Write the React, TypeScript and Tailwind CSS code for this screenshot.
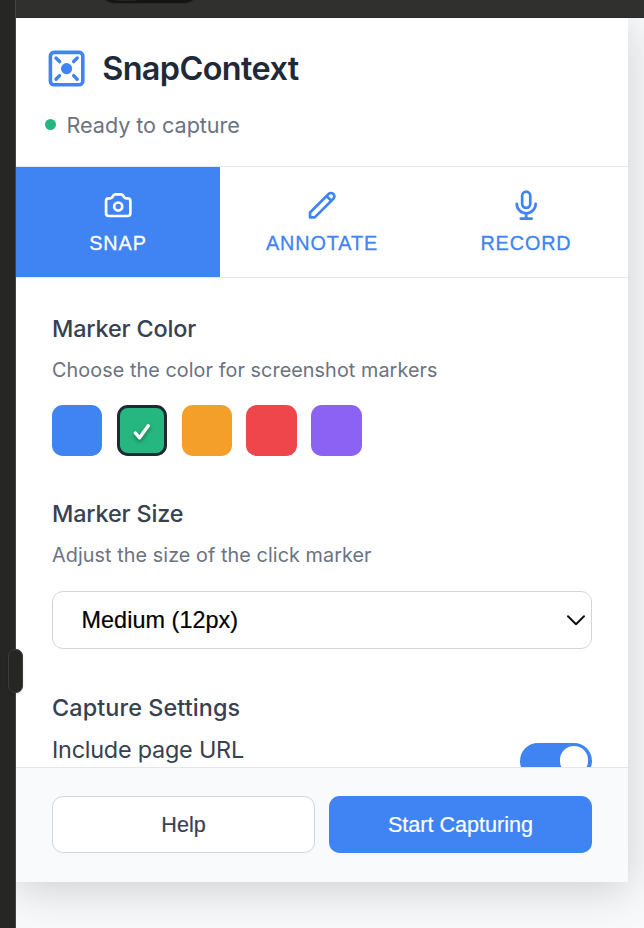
import type { ReactNode } from "react";

const sans = "font-['Inter','Liberation_Sans',sans-serif]";
const arial = "font-['Liberation_Sans',Arial,sans-serif]";

function Logo() {
  return (
    <svg className="size-[43.2px] shrink-0 text-[#4083f3]" viewBox="0 0 24 24" fill="none" stroke="currentColor" strokeWidth="2" strokeLinecap="round">
      <rect x="3" y="3" width="18" height="18" rx="2" />
      <circle cx="12" cy="12" r="3.1" fill="currentColor" stroke="none" />
      <path strokeWidth="1.9" d="M6.1 6.1l2 2M17.9 6.1l-2 2M6.1 17.9l2-2M17.9 17.9l-2-2" />
    </svg>
  );
}

function TabIcon({ children }: { children: ReactNode }) {
  return (
    <svg className="size-[32.4px]" viewBox="0 0 24 24" fill="none" stroke="currentColor" strokeWidth="2" strokeLinecap="round" strokeLinejoin="round">
      {children}
    </svg>
  );
}

function Tab({ label, active, children }: { label: string; active?: boolean; children: ReactNode }) {
  return (
    <button className={`flex h-[110px] flex-1 flex-col items-center pt-[22px] ${active ? "bg-[#4083f3] text-white" : "bg-white text-[#4083f3]"}`}>
      <TabIcon>{children}</TabIcon>
      <span className={`${arial} mt-[10px] text-[19.8px] leading-6 tracking-[0.9px] [-webkit-text-stroke:0.3px]`}>{label}</span>
    </button>
  );
}

function Heading({ children, tracking = "tracking-[-0.15px]" }: { children: ReactNode; tracking?: string }) {
  return <h2 className={`text-[23.4px] leading-7 font-medium text-[#374151] ${tracking}`}>{children}</h2>;
}

function Hint({ children }: { children: ReactNode }) {
  return <p className="mt-[15px] text-[19.8px] leading-6 tracking-[0.07px] text-[#6b7280]">{children}</p>;
}

export default function App() {
  return (
    <div className={`${sans} relative flex h-[928px] w-[644px] flex-col overflow-hidden bg-[#f8f9fb]`}>
      <div className="relative z-10 h-[18px] shrink-0 overflow-hidden border-b border-[#292927] bg-[#30302e]">
        <div className="absolute -top-7 left-[99px] h-8 w-[101px] rounded-[16px] border border-[#292927] bg-[#141412]" />
        <div className="absolute -top-7 left-[107px] h-[29px] w-[38px] rounded-[12px] bg-[#242422]" />
      </div>
      <div className="flex min-h-0 flex-1">
        <div className="relative z-20 -mt-[18px] w-4 shrink-0 border-r border-[#454543] bg-[#262624]">
          <div className="absolute top-[649px] left-2 h-11 w-[15px] rounded-[7px] border border-[#3c3c3a] bg-[#262624] shadow-sm" />
        </div>
        <main className="flex h-[864px] w-[612px] flex-col bg-white shadow-[0_8px_40px_rgba(0,0,0,0.17)]">
          <header className="h-[149px] shrink-0 border-b border-[#e5e7eb] pt-[29px] pl-[29px]">
            <div className="flex items-center gap-[14px]">
              <Logo />
              <h1 className="text-[32.4px] leading-10 font-semibold tracking-[-0.6px] text-[#1f2937]">SnapContext</h1>
            </div>
            <div className="mt-[21px] flex items-center gap-[10.5px]">
              <span className="-mt-px size-[11px] rounded-full bg-[#26b780]" />
              <span className="text-[21.6px] leading-7 tracking-[-0.04px] text-[#6b7280]">Ready to capture</span>
            </div>
          </header>
          <nav className="flex h-[111px] shrink-0 border-b border-[#e5e7eb]">
            <Tab label="SNAP" active>
              <path d="M3 9a2 2 0 012-2h.93a2 2 0 001.664-.89l.812-1.22A2 2 0 0110.07 4h3.86a2 2 0 011.664.89l.812 1.22A2 2 0 0018.07 7H19a2 2 0 012 2v9a2 2 0 01-2 2H5a2 2 0 01-2-2V9z" />
              <path d="M15 13a3 3 0 11-6 0 3 3 0 016 0z" />
            </Tab>
            <Tab label="ANNOTATE">
              <path d="M15.232 5.232l3.536 3.536m-2.036-5.036a2.5 2.5 0 113.536 3.536L6.5 21.036H3v-3.572L16.732 3.732z" />
            </Tab>
            <Tab label="RECORD">
              <path d="M19 11a7 7 0 01-7 7m0 0a7 7 0 01-7-7m7 7v4m0 0H8m4 0h4m-4-8a3 3 0 01-3-3V5a3 3 0 116 0v6a3 3 0 01-3 3z" />
            </Tab>
          </nav>
          <div className="min-h-0 flex-1 overflow-hidden px-9 pt-[37px]">
            <section className="h-[185px]">
              <Heading>Marker Color</Heading>
              <Hint>Choose the color for screenshot markers</Hint>
              <div className="mt-[23px] flex gap-[14.4px]">
                <span className="h-[51px] w-[50.4px] rounded-[10.8px] bg-[#4083f3]" />
                <span className="flex h-[51px] w-[50.4px] items-center justify-center rounded-[10.8px] border-[3px] border-[#1f2937] bg-[#26b780]">
                  <svg className="size-6 drop-shadow-[0_2px_2px_rgba(0,0,0,0.4)]" viewBox="0 0 24 24" fill="none" stroke="white" strokeWidth="3.4" strokeLinecap="round" strokeLinejoin="round">
                    <path d="M5.4 14l4.2 4.8L18.2 6.8" />
                  </svg>
                </span>
                <span className="h-[51px] w-[50.4px] rounded-[10.8px] bg-[#f39f29]" />
                <span className="h-[51px] w-[50.4px] rounded-[10.8px] bg-[#ef464b]" />
                <span className="h-[51px] w-[50.4px] rounded-[10.8px] bg-[#8b62f4]" />
              </div>
            </section>
            <section className="h-[194px]">
              <Heading>Marker Size</Heading>
              <Hint>Adjust the size of the click marker</Hint>
              <div className="mt-[24px] flex h-[58px] items-center justify-between rounded-[10.8px] border border-[#d1d5db] pr-[6px] pl-[28.5px]">
                <span className={`${arial} text-[23.4px] leading-7 tracking-[0.05px] text-black [-webkit-text-stroke:0.2px]`}>Medium (12px)</span>
                <svg className="h-[10px] w-[18px]" viewBox="0 0 18 10" fill="none" stroke="#111" strokeWidth="2" strokeLinecap="round" strokeLinejoin="round">
                  <path d="M1 1.2l8 8 8-8" />
                </svg>
              </div>
            </section>
            <section>
              <Heading tracking="tracking-[0.1px]">Capture Settings</Heading>
              <div className="mt-[12px] flex items-start justify-between">
                <span className="text-[23.4px] leading-8 tracking-[-0.22px] text-[#374151]">Include page URL</span>
                <span className="mt-[9px] flex h-[36px] w-[72px] justify-end rounded-full bg-[#4083f3] pt-[3px] pr-[3.6px]">
                  <span className="size-[28.8px] rounded-full bg-white" />
                </span>
              </div>
            </section>
          </div>
          <footer className={`${arial} flex h-[115px] shrink-0 gap-[14px] border-t border-[#e5e7eb] bg-[#f9fafb] px-9 pt-7 text-[21.6px] [-webkit-text-stroke:0.2px]`}>
            <button className="h-[57px] w-[263px] rounded-[10.8px] border border-[#d1d5db] bg-white pt-[2px] text-[#374151]">Help</button>
            <button className="h-[57px] w-[263px] rounded-[10.8px] bg-[#4083f3] pt-[2px] text-white">Start Capturing</button>
          </footer>
        </main>
      </div>
    </div>
  );
}
